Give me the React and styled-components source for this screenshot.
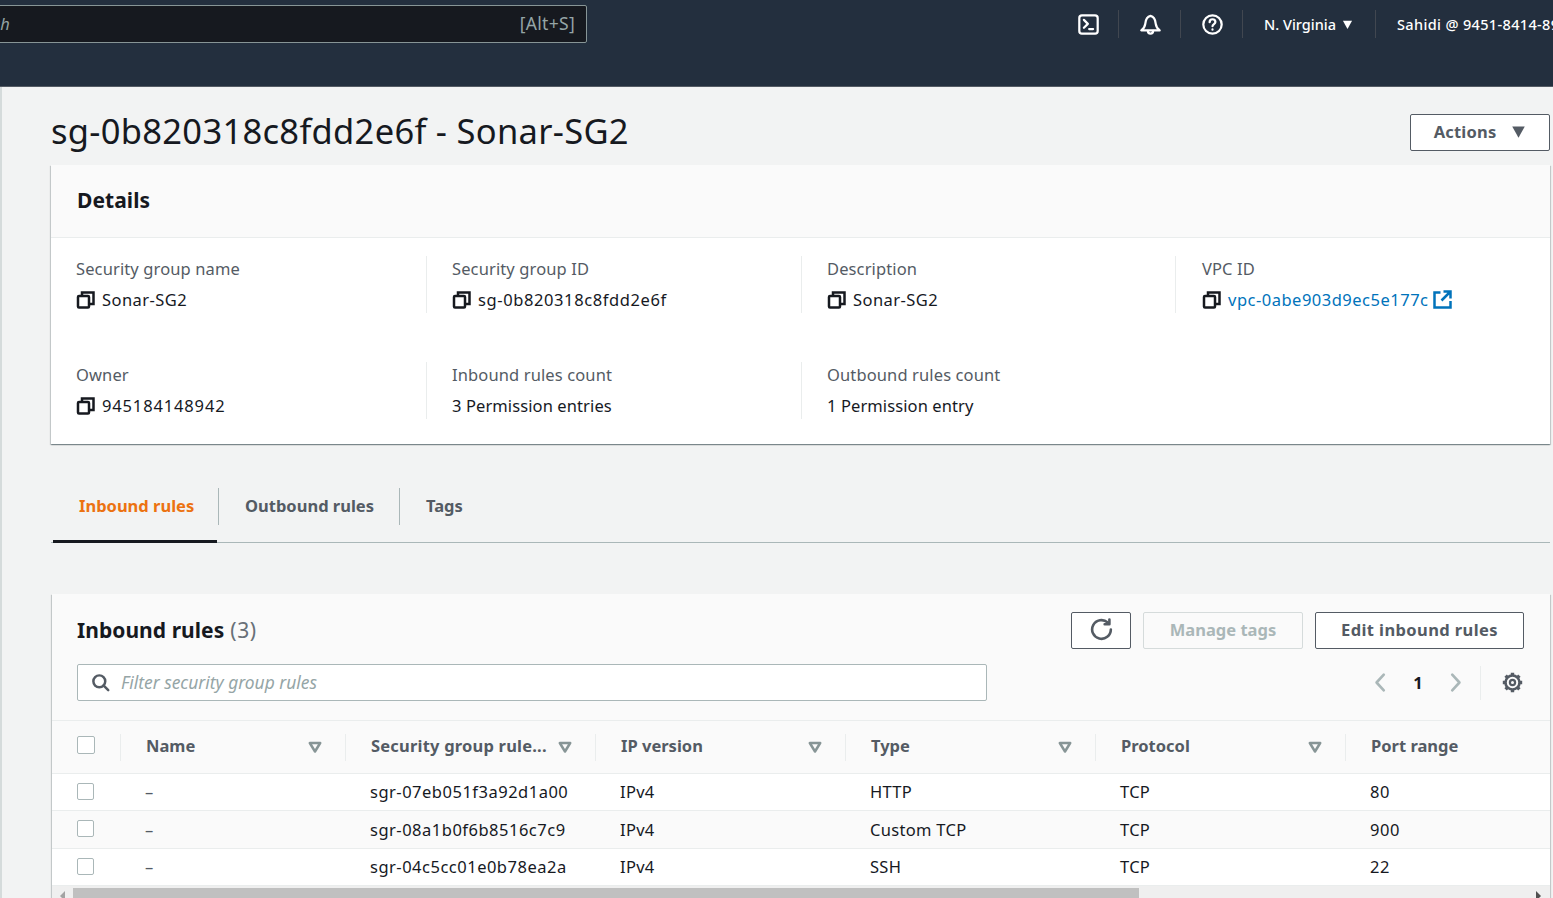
import React from 'react';
import styled, { createGlobalStyle } from 'styled-components';

const Global = createGlobalStyle`
  html, body {
    margin: 0;
    padding: 0;
    height: 898px;
    overflow: hidden;
    background: #f2f3f3;
    font-family: "Noto Sans", "Open Sans", sans-serif;
    font-size: 16.5px;
    color: #16191f;
  }
  * { box-sizing: border-box; }
`;

const Page = styled.div`
  width: 1553px;
  height: 898px;
  overflow: hidden;
`;

const Header = styled.header`
  height: 87px;
  background: #232f3e;
  border-bottom: 1px solid #545b64;
  display: flex;
  align-items: flex-start;
  justify-content: space-between;
  padding-top: 5px;
`;

const SearchBox = styled.div`
  width: 597px;
  height: 38px;
  margin-left: -10px;
  background: #16191f;
  border: 1px solid #879596;
  border-radius: 2px;
  display: flex;
  align-items: center;
  justify-content: space-between;
  padding: 0 11px 2px 0;
  color: #95a5a6;
  font-size: 17.5px;
  letter-spacing: 0.3px;
`;

const SearchHint = styled.span`
  font-style: italic;
  font-size: 16.5px;
  margin-left: -32px;
`;

const NavItems = styled.nav`
  display: flex;
  align-items: center;
  height: 28px;
  margin-top: 5px;
  color: #fff;
  font-size: 14.5px;
  font-weight: 500;
`;

const NavIcon = styled.span`
  width: 62px;
  height: 28px;
  padding-left: 1px;
  display: flex;
  align-items: center;
  justify-content: center;
  border-right: 1px solid #414750;
  color: #fff;
`;

const NavText = styled.span`
  display: flex;
  align-items: center;
  gap: 6px;
  height: 28px;
  white-space: nowrap;
  padding: ${p => (p.$last ? '0 0 0 21px' : '0 22px 0 21px')};
  width: ${p => (p.$last ? '177px' : '133px')};
  overflow: hidden;
  letter-spacing: ${p => (p.$last ? '0.35px' : '0')};
  border-right: ${p => (p.$last ? 'none' : '1px solid #414750')};
`;

const Body = styled.main`
  height: 811px;
  border-left: 2px solid #d5dbdb;
  padding: 0 3px 0 49px;
`;

const TitleRow = styled.div`
  height: 78px;
  display: flex;
  align-items: center;
  justify-content: space-between;
  padding-top: 12px;
`;

const Title = styled.h1`
  margin: -2px 0 0;
  font-size: 34.5px;
  font-weight: 400;
  letter-spacing: 0.3px;
  line-height: 44px;
`;

const Button = styled.button`
  height: 37px;
  width: ${p => p.$w};
  padding: 0 0 2px;
  background: ${p => (p.$disabled ? 'transparent' : '#fff')};
  border: 1px solid ${p => (p.$disabled ? '#d5dbdb' : '#545b64')};
  border-radius: 2px;
  color: ${p => (p.$disabled ? '#aab7b8' : '#545b64')};
  font-family: inherit;
  font-size: 16.5px;
  font-weight: 700;
  letter-spacing: ${p => p.$track || '0'};
  display: flex;
  align-items: center;
  justify-content: center;
  gap: ${p => p.$gap || 0};
`;

const Card = styled.section`
  background: ${p => p.$bg || '#fff'};
  box-shadow: 0 1px 1px 0 rgba(0, 28, 36, 0.3), 1px 1px 1px 0 rgba(0, 28, 36, 0.15), -1px 1px 1px 0 rgba(0, 28, 36, 0.15);
`;

const DetailsHead = styled.div`
  height: 73px;
  background: #fafafa;
  border-bottom: 1px solid #eaeded;
  padding: 0 26px 3px;
  display: flex;
  align-items: center;
`;

const CardTitle = styled.h2`
  margin: 0;
  font-size: 21px;
  font-weight: 700;
  line-height: 30px;
  letter-spacing: 0.05px;
  color: #16191f;
`;

const Count = styled.span`
  font-weight: 400;
  color: #687078;
  margin-left: 6px;
  letter-spacing: 0.6px;
`;

const DetailsGrid = styled.div`
  display: grid;
  grid-template-columns: 375px 375px 374px 1fr;
  grid-auto-rows: 106px;
  padding-top: 18px;
  height: 206px;
`;

const Field = styled.div`
  height: 57px;
  padding-left: ${p => p.$pad};
  border-left: ${p => (p.$first ? 'none' : '1px solid #eaeded')};
`;

const Label = styled.div`
  line-height: 25px;
  color: #545b64;
  letter-spacing: 0.12px;
`;

const Value = styled.div`
  display: flex;
  align-items: center;
  gap: 7px;
  line-height: 27px;
  margin-top: 5px;
  white-space: nowrap;
  letter-spacing: ${p => p.$track};
`;

const Link = styled.a`
  color: #0073bb;
  display: flex;
  align-items: center;
  gap: 4px;
`;

const Tabs = styled.div`
  display: flex;
  height: 55px;
  margin-top: 44px;
  padding-left: 2px;
  border-bottom: 1px solid #aab7b8;
`;

const Tab = styled.div`
  height: 55px;
  width: ${p => p.$w};
  border-bottom: 3px solid ${p => (p.$active ? '#16191f' : 'transparent')};
  color: ${p => (p.$active ? '#ec7211' : '#545b64')};
  font-weight: 700;
  display: flex;
  align-items: flex-start;
`;

const TabLabel = styled.span`
  height: 37px;
  width: ${p => p.$w || '100%'};
  flex: none;
  padding-left: ${p => p.$pad || '26px'};
  line-height: 36px;
  border-right: ${p => (p.$last ? 'none' : '1px solid #aab7b8')};
`;

const RulesCard = styled(Card)`
  margin: 51px 0 0 1px;
  height: 304px;
  overflow: hidden;
  display: flex;
  flex-direction: column;
`;

const RulesHead = styled.div`
  height: 127px;
  flex: none;
  background: #fafafa;
  border-bottom: 1px solid #eaeded;
  padding: 18px 26px 0 25px;
`;

const RulesTop = styled.div`
  display: flex;
  align-items: center;
  justify-content: space-between;
  h2 { margin-top: -1px; }
`;

const Actions = styled.div`
  display: flex;
  gap: 12px;
`;

const FilterRow = styled.div`
  display: flex;
  align-items: center;
  justify-content: space-between;
  margin-top: 15px;
`;

const Filter = styled.div`
  width: 910px;
  height: 37px;
  background: #fff;
  border: 1px solid #aab7b8;
  border-radius: 2px;
  display: flex;
  align-items: center;
  gap: 11px;
  padding: 0 0 1px 13px;
  font-size: 17.4px;
  font-style: italic;
  color: #95a5a6;
`;

const SearchGlyph = styled.span`
  display: flex;
  color: #545b64;
`;

const Pager = styled.div`
  display: flex;
  align-items: center;
  height: 34px;
  margin-right: 1px;
  color: #aab7b8;
`;

const PageNo = styled.span`
  width: 54px;
  text-align: center;
  color: #16191f;
  font-weight: 700;
`;

const PagerRule = styled.span`
  width: 1px;
  height: 34px;
  background: #eaeded;
  margin: 0 21px 0 14px;
`;

const Row = styled.div`
  display: grid;
  grid-template-columns: 68px 225px repeat(4, 250px) 1fr;
  align-items: center;
  flex: none;
  height: ${p => p.$h};
  background: ${p => p.$bg};
  border-bottom: 1px solid #eaeded;
`;

const Check = styled.span`
  display: block;
  width: ${p => (p.$head ? '18px' : '17px')};
  height: ${p => (p.$head ? '18px' : '17px')};
  margin: 0 0 ${p => (p.$head ? '4px' : '2px')} 25px;
  background: #fff;
  border: 1px solid #aab7b8;
  border-radius: 2px;
`;

const HeadCell = styled.div`
  height: 27px;
  display: flex;
  align-items: center;
  justify-content: space-between;
  padding: 0 23px 3px 25px;
  border-left: 1px solid #eaeded;
  color: #545b64;
  font-weight: 700;
  letter-spacing: ${p => p.$track || '0'};
  white-space: nowrap;
`;

const Cell = styled.div`
  padding: 0 0 1px 25px;
  white-space: nowrap;
  letter-spacing: ${p => p.$track || '0.3px'};
`;

const Dash = styled.span`
  color: #545b64;
`;

const Scrollbar = styled.div`
  flex: 1;
  background: #efefef;
  display: flex;
  align-items: flex-start;
  justify-content: space-between;
  padding: 2px 0 0 0;
`;

const ScrollThumb = styled.div`
  width: 1066px;
  height: 12px;
  margin-left: 8px;
  margin-right: auto;
  background: #c0c0c0;
`;

const ScrollArrow = styled.span`
  width: 0;
  height: 0;
  margin: 3px ${p => (p.$right ? '9px' : '0')} 0 ${p => (p.$right ? '0' : '8px')};
  border-top: 5px solid transparent;
  border-bottom: 5px solid transparent;
  ${p => (p.$right ? 'border-left: 5px solid #505050;' : 'border-right: 5px solid #a3a3a3;')}
`;

const Icon = ({ size = 16, children, fill = 'none', width = 2 }) => (
  <svg
    width={size}
    height={size}
    viewBox="0 0 16 16"
    fill={fill}
    stroke="currentColor"
    strokeWidth={width}
    strokeLinecap="round"
    strokeLinejoin="round"
    style={{ flex: 'none' }}
  >
    {children}
  </svg>
);

const CopyIcon = () => (
  <svg width="19" height="19" viewBox="0 0 19 19" fill="none" stroke="#16191f" strokeWidth="2.5" style={{ flex: 'none' }}>
    <rect x="2" y="6" width="11" height="11.500" rx="1" />
    <path d="M6 5V2.500h11.500V14H14" />
  </svg>
);

const ExternalIcon = () => (
  <svg width="19" height="19" viewBox="0 0 19 19" fill="none" stroke="#0073bb" strokeWidth="2.500" style={{ flex: 'none' }}>
    <path d="M7.500 2.500H1.500v15h16V11" />
    <path d="M10.500 1.500h7V8.500M17 2 8.500 10.500" />
  </svg>
);

const TerminalIcon = () => (
  <Icon size={21} width={1.7}>
    <rect x="1" y="1" width="14" height="14" rx="2" />
    <path d="M4.500 4.500 7.500 7.500 4.500 10.500M8.500 11.500h3" />
  </Icon>
);

const BellIcon = () => (
  <Icon size={21} width={1.7}>
    <path d="M1 12.500h14c-1.300-1-2.700-2.500-3-5-.3-2.800-1.500-5.500-4-6-2.500.5-3.700 3.200-4 6-.3 2.500-1.700 4-3 5Z" />
    <path d="M6 12.800c0 1.400.9 2.200 2 2.200s2-.8 2-2.200" />
  </Icon>
);

const HelpIcon = () => (
  <Icon size={21} width={1.7}>
    <circle cx="8" cy="8" r="7" />
    <path d="M5.800 6.200C5.800 4.900 6.800 4 8 4s2.200.9 2.200 2.100C10.200 7.600 8 7.700 8 9.300" />
    <path d="M8 11.800v.2" />
  </Icon>
);

const Caret = ({ size = 12, color = 'currentColor' }) => (
  <svg width={size} height={size} viewBox="0 0 12 12" style={{ flex: 'none' }}>
    <path d="M1 2h10L6 11Z" fill={color} />
  </svg>
);

const SortCaret = () => (
  <svg width="14" height="13" viewBox="0 0 14 13" style={{ flex: 'none', marginTop: 3 }}>
    <path d="M1.800 2h10.400L7 10.500Z" fill="none" stroke="#879596" strokeWidth="2.500" strokeLinejoin="round" />
  </svg>
);

const RefreshIcon = () => (
  <Icon size={23} width={1.8}>
    <path d="M14.500 8a6.500 6.500 0 1 1-2.200-4.900" />
    <path d="M13.500 1v3.300H10.200" />
  </Icon>
);

const SearchIcon = () => (
  <Icon size={19} width={2.1}>
    <circle cx="7" cy="7" r="5" />
    <path d="m14.500 14.500-4-4" />
  </Icon>
);

const Chevron = ({ right }) => (
  <Icon size={21} width={2}>
    <path d={right ? 'M5.500 2l5.500 6-5.500 6' : 'M10.500 2 5 8l5.500 6'} />
  </Icon>
);

// ring with eight short teeth, the way the console draws its settings cog
const GearIcon = () => (
  <svg width="21" height="21" viewBox="0 0 21 21" fill="none" stroke="#545b64" style={{ flex: 'none' }}>
    <circle cx="10.500" cy="10.500" r="7" strokeWidth="2.600" />
    <circle cx="10.500" cy="10.500" r="2.600" strokeWidth="2.200" />
    <path
      d="M10.500 .8v3M10.500 17.200v3M.8 10.500h3M17.200 10.500h3M3.600 3.600l2 2M15.400 15.400l2 2M3.600 17.400l2-2M15.400 5.600l2-2"
      strokeWidth="3.400"
    />
  </svg>
);

const fields = [
  { label: 'Security group name', value: 'Sonar-SG2', copy: true, track: '0.45px' },
  { label: 'Security group ID', value: 'sg-0b820318c8fdd2e6f', copy: true, track: '0.6px' },
  { label: 'Description', value: 'Sonar-SG2', copy: true, track: '0.45px' },
  { label: 'VPC ID', value: 'vpc-0abe903d9ec5e177c', copy: true, link: true, track: '0.5px' },
  { label: 'Owner', value: '945184148942', copy: true, track: '0.85px' },
  { label: 'Inbound rules count', value: '3 Permission entries', track: '0.1px' },
  { label: 'Outbound rules count', value: '1 Permission entry', track: '0.1px' },
];

const columns = [
  { name: 'Name' },
  { name: 'Security group rule...', track: '0.2px' },
  { name: 'IP version' },
  { name: 'Type' },
  { name: 'Protocol' },
];

const rules = [
  { id: 'sgr-07eb051f3a92d1a00', type: 'HTTP', port: '80', h: '37px', bg: '#fff' },
  { id: 'sgr-08a1b0f6b8516c7c9', type: 'Custom TCP', port: '900', h: '38px', bg: '#fafafa' },
  { id: 'sgr-04c5cc01e0b78ea2a', type: 'SSH', port: '22', h: '37px', bg: '#fff' },
];

export default function App() {
  return (
    <Page>
      <Global />
      <Header>
        <SearchBox>
          <SearchHint>Search</SearchHint>
          <span>[Alt+S]</span>
        </SearchBox>
        <NavItems>
          <NavIcon><TerminalIcon /></NavIcon>
          <NavIcon><BellIcon /></NavIcon>
          <NavIcon><HelpIcon /></NavIcon>
          <NavText>N. Virginia <Caret size={11} /></NavText>
          <NavText $last>Sahidi @ 9451-8414-8942</NavText>
        </NavItems>
      </Header>
      <Body>
        <TitleRow>
          <Title>sg-0b820318c8fdd2e6f - Sonar-SG2</Title>
          <Button $w="140px" $gap="15px" $track="0.2px">Actions <Caret size={15} color="#545b64" /></Button>
        </TitleRow>
        <Card>
          <DetailsHead><CardTitle>Details</CardTitle></DetailsHead>
          <DetailsGrid>
            {fields.map((f, i) => (
              <Field key={f.label} $first={i % 4 === 0} $pad={i % 4 === 3 ? '26px' : '25px'}>
                <Label>{f.label}</Label>
                <Value $track={f.track}>
                  {f.copy && <CopyIcon />}
                  {f.link ? <Link>{f.value} <ExternalIcon /></Link> : f.value}
                </Value>
              </Field>
            ))}
          </DetailsGrid>
        </Card>
        <Tabs>
          <Tab $w="164px" $active><TabLabel $w="166px">Inbound rules</TabLabel></Tab>
          <Tab $w="183px"><TabLabel $pad="28px">Outbound rules</TabLabel></Tab>
          <Tab $w="100px"><TabLabel $last>Tags</TabLabel></Tab>
        </Tabs>
        <RulesCard $bg="#fff">
          <RulesHead>
            <RulesTop>
              <CardTitle>Inbound rules<Count>(3)</Count></CardTitle>
              <Actions>
                <Button $w="60px"><RefreshIcon /></Button>
                <Button $w="160px" $disabled>Manage tags</Button>
                <Button $w="209px" $track="0.4px">Edit inbound rules</Button>
              </Actions>
            </RulesTop>
            <FilterRow>
              <Filter>
                <SearchGlyph><SearchIcon /></SearchGlyph>
                Filter security group rules
              </Filter>
              <Pager>
                <Chevron />
                <PageNo>1</PageNo>
                <Chevron right />
                <PagerRule />
                <GearIcon />
              </Pager>
            </FilterRow>
          </RulesHead>
          <Row $h="53px" $bg="#fafafa">
            <Check $head />
            {columns.map(c => (
              <HeadCell key={c.name} $track={c.track}>{c.name}<SortCaret /></HeadCell>
            ))}
            <HeadCell>Port range</HeadCell>
          </Row>
          {rules.map(r => (
            <Row key={r.id} $h={r.h} $bg={r.bg}>
              <Check />
              <Cell><Dash>–</Dash></Cell>
              <Cell $track="0.5px">{r.id}</Cell>
              <Cell>IPv4</Cell>
              <Cell>{r.type}</Cell>
              <Cell>TCP</Cell>
              <Cell $track="0.6px">{r.port}</Cell>
            </Row>
          ))}
          <Scrollbar>
            <ScrollArrow />
            <ScrollThumb />
            <ScrollArrow $right />
          </Scrollbar>
        </RulesCard>
      </Body>
    </Page>
  );
}
